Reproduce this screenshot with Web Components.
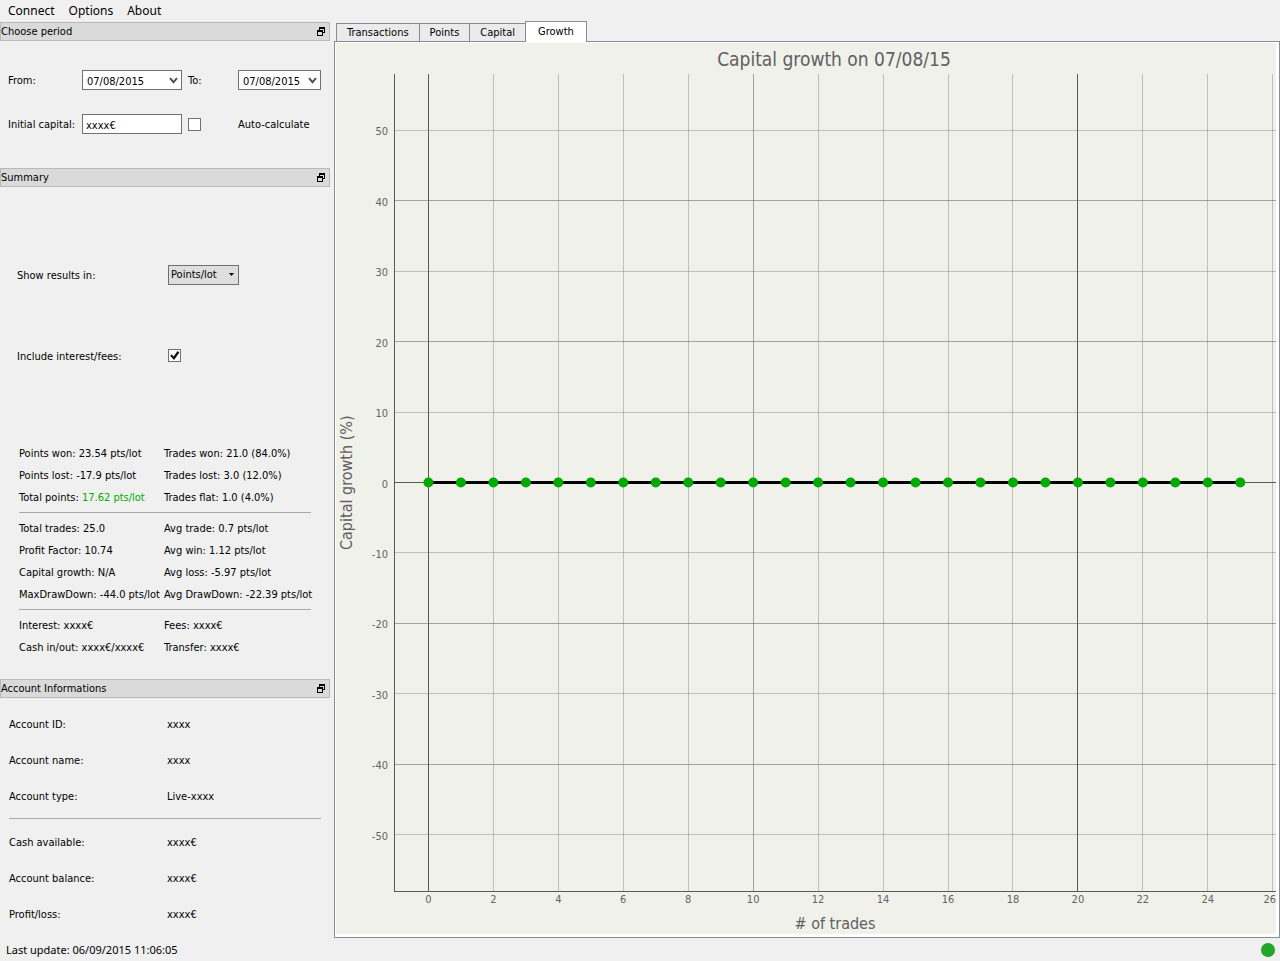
<!DOCTYPE html>
<html lang="en">
<head>
<meta charset="utf-8">
<title>Trading statistics</title>
<style>
html, body {
  height: 100%;
  margin: 0;
}
body {
  --ui: "DejaVu Sans Condensed", "Noto Sans", sans-serif;
  --menu: "Noto Sans", "Open Sans", sans-serif;
  background: #f0f0f0;
  color: #000;
  font: 11px/16px var(--ui);
}
</style>
</head>
<body>
<main-window>
  <menu-bar slot="menu"></menu-bar>
  <dock-panel slot="docks" heading="Choose period">
    <period-form></period-form>
  </dock-panel>
  <dock-panel slot="docks" heading="Summary">
    <summary-options></summary-options>
    <stat-group>
      <stat-item label="Points won:">23.54 pts/lot</stat-item>
      <stat-item label="Trades won:">21.0 (84.0%)</stat-item>
      <stat-item label="Points lost:">-17.9 pts/lot</stat-item>
      <stat-item label="Trades lost:">3.0 (12.0%)</stat-item>
      <stat-item label="Total points:" gain>17.62 pts/lot</stat-item>
      <stat-item label="Trades flat:">1.0 (4.0%)</stat-item>
    </stat-group>
    <stat-group>
      <stat-item label="Total trades:">25.0</stat-item>
      <stat-item label="Avg trade:">0.7 pts/lot</stat-item>
      <stat-item label="Profit Factor:">10.74</stat-item>
      <stat-item label="Avg win:">1.12 pts/lot</stat-item>
      <stat-item label="Capital growth:">N/A</stat-item>
      <stat-item label="Avg loss:">-5.97 pts/lot</stat-item>
      <stat-item label="MaxDrawDown:">-44.0 pts/lot</stat-item>
      <stat-item label="Avg DrawDown:">-22.39 pts/lot</stat-item>
    </stat-group>
    <stat-group last>
      <stat-item label="Interest:">xxxx€</stat-item>
      <stat-item label="Fees:">xxxx€</stat-item>
      <stat-item label="Cash in/out:">xxxx€/xxxx€</stat-item>
      <stat-item label="Transfer:">xxxx€</stat-item>
    </stat-group>
  </dock-panel>
  <dock-panel slot="docks" heading="Account Informations">
    <account-list></account-list>
  </dock-panel>
  <tab-view slot="main">
    <growth-chart heading="Capital growth on 07/08/15" xlabel="# of trades" ylabel="Capital growth (%)"></growth-chart>
  </tab-view>
  <status-bar slot="status">Last update: 06/09/2015 11:06:05</status-bar>
</main-window>

<script>
// small helper, every element here just fills its shadow root
function define(name, render) {
  customElements.define(name, class extends HTMLElement {
    constructor() {
      super();
      this.attachShadow({ mode: "open" });
    }
    connectedCallback() {
      this.shadowRoot.innerHTML = render(this);
    }
  });
}

define("main-window", () => `
<style>
:host {
  display: grid;
  grid-template-columns: 330px minmax(0, 1fr);
  grid-template-rows: auto minmax(0, 1fr) 23px;
  column-gap: 4px;
  min-height: 100%;
  height: 100vh;
}
header, footer { grid-column: 1 / -1; }
main { display: grid; min-height: 0; }
</style>
<header><slot name="menu"></slot></header>
<aside><slot name="docks"></slot></aside>
<main><slot name="main"></slot></main>
<footer><slot name="status"></slot></footer>
`);

define("menu-bar", () => `
<style>
:host { display: block; }
nav {
  display: flex;
  height: 22px;
  padding-left: 1px;
}
button {
  border: 0;
  background: none;
  padding: 0 7px;
  font: 12px/18px var(--menu);
  color: inherit;
}
</style>
<nav>
  <button>Connect</button><button>Options</button><button>About</button>
</nav>
`);

define("dock-panel", (el) => `
<style>
:host { display: block; }
header {
  display: flex;
  justify-content: space-between;
  align-items: center;
  box-sizing: border-box;
  height: 19px;
  padding: 0 3px 0 0;
  border: 1px solid #b9b9b9;
  background: #dadada;
}
h2 {
  margin: 0;
  padding-top: 1px;
  font: inherit;
}
button {
  display: flex;
  border: 0;
  padding: 0;
  background: none;
}
</style>
<header>
  <h2>${el.getAttribute("heading")}</h2>
  <button aria-label="Float">
    <svg width="10" height="10" viewBox="0 0 10 10" shape-rendering="crispEdges">
      <path d="M3 0h6v6H7V5h1V2H4v1H3zM1 3h6v6H1zM2 5v3h4V5z" fill="#000" fill-rule="evenodd"/>
    </svg>
  </button>
</header>
<slot></slot>
`);

define("period-form", () => `
<style>
:host { display: block; }
form {
  display: grid;
  grid-template-columns: 68px 100px 44px 83px;
  grid-auto-rows: 20px;
  column-gap: 6px;
  row-gap: 24px;
  align-items: center;
  padding: 29px 8px 34px;
}
label { padding-top: 2px; }
input {
  font: inherit;
  color: inherit;
}
.box {
  display: flex;
  align-items: center;
  box-sizing: border-box;
  height: 20px;
  border: 1px solid #707070;
  background: #fff;
}
.box input {
  flex: 1;
  min-width: 0;
  border: 0;
  padding: 3px 0 0 4px;
  background: none;
  outline: none;
}
.box #capital { padding-left: 3px; }
.box button {
  display: flex;
  border: 0;
  padding: 0 3px;
  background: none;
}
[type=checkbox] {
  appearance: none;
  box-sizing: border-box;
  width: 13px;
  height: 13px;
  margin: 0;
  border: 1px solid #707070;
  background: #fff;
}
</style>
<form>
  <label for="from">From:</label>
  <div class="box">
    <input id="from" value="07/08/2015">
    <button type="button" aria-label="Open calendar"><svg width="9" height="7" viewBox="0 0 9 7"><path d="M1 1.2l3.500 4 3.500-4" fill="none" stroke="#505050" stroke-width="2"/></svg></button>
  </div>
  <label for="to">To:</label>
  <div class="box">
    <input id="to" value="07/08/2015">
    <button type="button" aria-label="Open calendar"><svg width="9" height="7" viewBox="0 0 9 7"><path d="M1 1.2l3.500 4 3.500-4" fill="none" stroke="#505050" stroke-width="2"/></svg></button>
  </div>
  <label for="capital">Initial capital:</label>
  <div class="box"><input id="capital" value="xxxx€"></div>
  <input id="auto" type="checkbox">
  <label for="auto">Auto-calculate</label>
</form>
`);

define("summary-options", () => `
<style>
:host {
  display: grid;
  grid-template-columns: 151px auto;
  grid-auto-rows: 81px;
  align-items: center;
  justify-content: start;
  padding: 47px 17px 46px;
}
label { padding-top: 2px; }
.combo {
  display: grid;
  align-items: center;
  justify-items: end;
  width: 71px;
}
select {
  grid-area: 1 / 1;
  appearance: none;
  box-sizing: border-box;
  width: 100%;
  height: 20px;
  border: 1px solid #707070;
  border-radius: 0;
  padding: 1px 2px 0;
  background: #dedede;
  font: inherit;
  color: inherit;
}
.combo svg {
  grid-area: 1 / 1;
  margin-right: 5px;
  pointer-events: none;
}
input {
  appearance: none;
  display: grid;
  box-sizing: border-box;
  width: 13px;
  height: 13px;
  margin: 0;
  border: 1px solid #707070;
  background: #fff;
}
input:checked::before {
  content: "";
  background: #111;
  clip-path: polygon(10% 52%, 26% 40%, 42% 60%, 78% 8%, 94% 22%, 46% 92%);
}
</style>
<label for="unit">Show results in:</label>
<span class="combo">
  <select id="unit"><option>Points/lot</option><option>Points</option><option>%</option></select>
  <svg width="5" height="3" viewBox="0 0 5 3"><path d="M0 0h5L2.500 3z"/></svg>
</span>
<label for="fees">Include interest/fees:</label>
<input id="fees" type="checkbox" checked>
`);

define("stat-group", () => `
<style>
:host {
  display: grid;
  grid-template-columns: 145px 1fr;
  grid-auto-rows: 22px;
  align-items: center;
  margin: 0 19px 4px;
  padding-bottom: 4px;
  border-bottom: 1px solid #a9a9a9;
  white-space: nowrap;
}
:host([last]) {
  border: 0;
  margin-bottom: 0;
  padding-bottom: 21px;
}
</style>
<slot></slot>
`);

define("stat-item", (el) => `
<style>
:host {
  display: block;
  padding-top: 2px;
}
:host([gain]) span { color: #00aa00; }
</style>
${el.getAttribute("label")} <span><slot></slot></span>
`);

define("account-list", () => `
<style>
:host {
  display: block;
  padding: 8px 9px 5px;
}
dl {
  display: grid;
  grid-template-columns: 158px 1fr;
  grid-auto-rows: 36px;
  align-items: center;
  margin: 0;
}
dt, dd {
  margin: 0;
  padding-top: 2px;
}
hr {
  margin: 4px 0 5px;
  border: 0;
  border-top: 1px solid #a9a9a9;
}
</style>
<dl>
  <dt>Account ID:</dt><dd>xxxx</dd>
  <dt>Account name:</dt><dd>xxxx</dd>
  <dt>Account type:</dt><dd>Live-xxxx</dd>
</dl>
<hr>
<dl>
  <dt>Cash available:</dt><dd>xxxx€</dd>
  <dt>Account balance:</dt><dd>xxxx€</dd>
  <dt>Profit/loss:</dt><dd>xxxx€</dd>
</dl>
`);

define("tab-view", () => `
<style>
:host {
  display: grid;
  grid-template-rows: 19px minmax(0, 1fr);
}
nav {
  display: flex;
  align-items: flex-end;
  padding-left: 2px;
}
button {
  box-sizing: border-box;
  height: 18px;
  border: 1px solid #898c95;
  border-bottom: 0;
  border-right-width: 0;
  padding: 1px 10px 0;
  background: #ebebeb;
  font: inherit;
  color: inherit;
}
button[aria-selected=true] {
  z-index: 1;
  height: 21px;
  margin-bottom: -1px;
  border-right-width: 1px;
  padding: 0 12px;
  background: #fff;
}
section {
  display: grid;
  min-height: 0;
  border: 1px solid #898c95;
  padding: 1px 3px 3px 1px;
  background: #fff;
}
</style>
<nav role="tablist">
  <button role="tab">Transactions</button>
  <button role="tab">Points</button>
  <button role="tab">Capital</button>
  <button role="tab" aria-selected="true">Growth</button>
</nav>
<section role="tabpanel"><slot></slot></section>
`);

// visible range of the two axes
const X = { min: -1.06, max: 26.1 };
const Y = { min: -58, max: 58 };
const px = (v) => ((v - X.min) / (X.max - X.min) * 100).toFixed(3) + "%";
const py = (v) => ((Y.max - v) / (Y.max - Y.min) * 100).toFixed(3) + "%";
const growth = Array(26).fill(0);

function chartMarks() {
  let out = "";
  for (let x = 0; x <= 26; x += 2) {
    const cls = x % 20 === 0 ? "major" : x % 10 === 0 ? "mid" : "";
    out += `<line class="${cls}" x1="${px(x)}" x2="${px(x)}" y1="0" y2="100%"/>`;
    // the last label is kept inside the plot
    const last = x === 26;
    out += `<text x="${last ? "100%" : px(x)}" y="100%" dy="12" text-anchor="${last ? "end" : "middle"}">${x}</text>`;
  }
  for (let y = -50; y <= 50; y += 10) {
    const cls = y === 0 ? "major" : y % 20 === 0 ? "mid" : "";
    out += `<line class="${cls}" x1="0" x2="100%" y1="${py(y)}" y2="${py(y)}"/>`;
    out += `<text x="0" dx="-6" y="${py(y)}" dy="5" text-anchor="end">${y}</text>`;
  }
  out += `<line class="axis" x1="0" x2="0" y1="0" y2="100%"/>`;
  out += `<line class="axis" x1="0" x2="100%" y1="100%" y2="100%"/>`;
  for (let i = 1; i < growth.length; i++) {
    out += `<line class="curve" x1="${px(i - 1)}" y1="${py(growth[i - 1])}" x2="${px(i)}" y2="${py(growth[i])}"/>`;
  }
  growth.forEach((v, i) => {
    out += `<circle cx="${px(i)}" cy="${py(v)}" r="5"/>`;
  });
  return out;
}

define("growth-chart", (el) => `
<style>
:host {
  display: grid;
  grid-template-columns: 22px 36px minmax(0, 1fr);
  grid-template-rows: 31px minmax(0, 1fr) 43px;
  overflow: hidden;
  background: #f0f1eb;
  color: #5f6060;
}
h1 {
  grid-column: 1 / -1;
  margin: 0;
  padding-left: 56px;
  text-align: center;
  font: 19px/32px var(--ui);
}
.y {
  writing-mode: vertical-rl;
  transform: rotate(180deg);
  text-align: center;
  font-size: 16px;
  line-height: 22px;
}
.x {
  grid-column: 3;
  align-self: end;
  text-align: center;
  font-size: 16px;
  line-height: 20px;
}
svg {
  grid-column: 3;
  width: 100%;
  height: 100%;
  overflow: visible;
}
line {
  stroke: #646464;
  stroke-opacity: .35;
  shape-rendering: crispEdges;
}
.mid { stroke-opacity: .55; }
.major, .axis { stroke: #585a58; stroke-opacity: 1; }
.curve {
  stroke: #000;
  stroke-opacity: 1;
  stroke-width: 3;
}
circle { fill: #00aa00; }
text {
  fill: #646464;
  font-size: 11px;
}
</style>
<h1>${el.getAttribute("heading")}</h1>
<div class="y">${el.getAttribute("ylabel")}</div>
<svg>${chartMarks()}</svg>
<div class="x">${el.getAttribute("xlabel")}</div>
`);

define("status-bar", () => `
<style>
:host {
  display: flex;
  justify-content: space-between;
  align-items: center;
  height: 23px;
  padding: 0 5px 0 6px;
  font-family: var(--menu);
}
i {
  width: 14px;
  height: 14px;
  border-radius: 50%;
  background: #22a727;
}
</style>
<span><slot></slot></span><i></i>
`);
</script>
</body>
</html>
